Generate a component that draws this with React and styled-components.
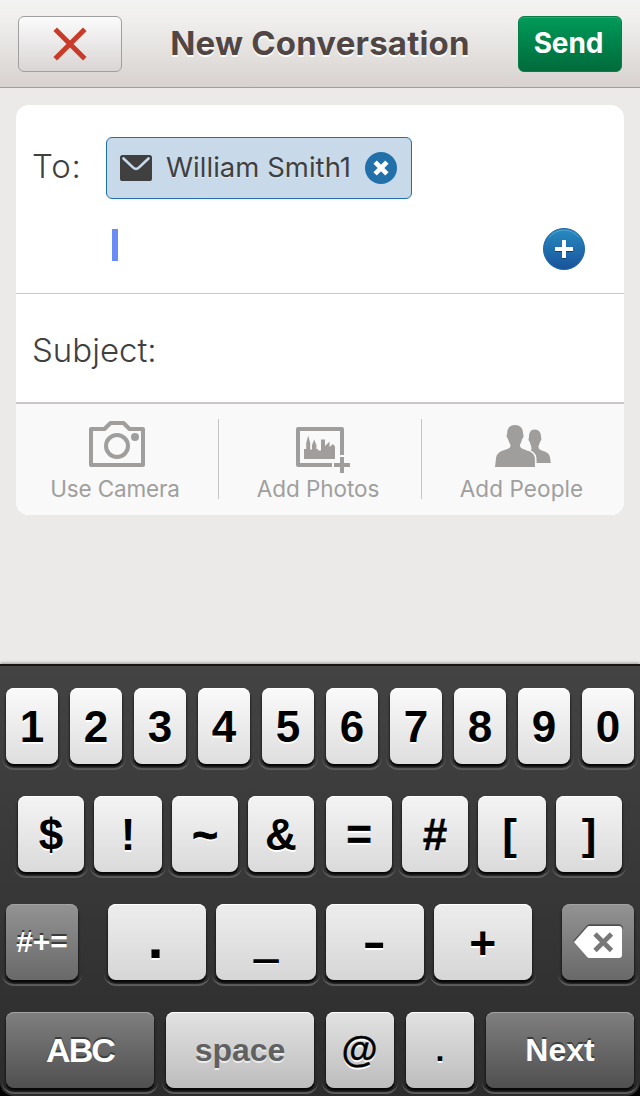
import React from 'react';
import styled, { createGlobalStyle, css } from 'styled-components';

const Global = createGlobalStyle`
  * { box-sizing: border-box; }
  body { margin: 0; background: #ebeae8; }
  button { appearance: none; border: 0; margin: 0; padding: 0; font: inherit; color: inherit; background: none; }
  svg { display: block; flex: none; overflow: visible; }
`;

const Screen = styled.div`
  width: 640px;
  height: 1096px;
  display: flex;
  flex-direction: column;
  overflow: hidden;
  background: #ebeae8;
  font-family: Inter, sans-serif;
  color: #404040;
  white-space: nowrap;
`;

const Header = styled.header`
  height: 88px;
  flex: none;
  display: flex;
  justify-content: space-between;
  align-items: flex-start;
  padding: 16px 18px 0;
  border-bottom: 1px solid #a09f9e;
  background: linear-gradient(#f3f3f3, #efeeec 25%, #d7d2d0);
`;

const HeaderButton = styled.button`
  width: 104px;
  height: 56px;
  border-radius: 6px;
  display: flex;
  justify-content: center;
  align-items: center;
`;

const CancelButton = styled(HeaderButton)`
  border: 1px solid #a09f9f;
  background: linear-gradient(#fbfbfb, #d9d5d4);
`;

const SendButton = styled(HeaderButton)`
  border: 1px solid #0a7c48;
  background: linear-gradient(#009a59, #006b3c);
  box-shadow: inset 0 1px 0 #2aa873;
  color: #fff;
  font-size: 28px;
  font-weight: 700;
  letter-spacing: -0.1px;
  padding: 0 3px 3px 0;
`;

const Title = styled.h1`
  margin: 0;
  height: 55px;
  line-height: 55px;
  font-size: 33px;
  font-weight: 700;
  letter-spacing: 0.18px;
  color: #524644;
  text-shadow: 0 2px 0 #fff;
`;

const Card = styled.section`
  margin: 17px 16px 0;
  height: 410px;
  flex: none;
  display: flex;
  flex-direction: column;
  border-radius: 13px;
  overflow: hidden;
  background: #fff;
`;

const Recipients = styled.div`
  height: 189px;
  padding: 32px 39px 0 16px;
  border-bottom: 1px solid #c9c9c9;
  display: grid;
  grid-template-columns: 74px 1fr auto;
  grid-template-rows: 62px 29px 42px;
`;

const FieldLabel = styled.label`
  font-size: 33px;
  font-weight: 360;
  line-height: 58px;
  letter-spacing: ${(p) => p.$spacing}px;
`;

const Chip = styled.div`
  grid-column: 2 / 4;
  justify-self: start;
  width: 306px;
  height: 62px;
  padding: 0 14px 0 13px;
  display: flex;
  align-items: center;
  border: 1px solid #1f70ac;
  border-radius: 6px;
  background: #c8dae9;
`;

const ChipName = styled.span`
  flex: 1;
  padding: 0 0 2px 14px;
  font-size: 27.5px;
  font-weight: 380;
  letter-spacing: 0.02px;
  text-shadow: 0 1px 0 #e4edf5;
`;

const Caret = styled.span`
  grid-column: 2;
  grid-row: 3;
  margin: 1px 0 0 6px;
  width: 6px;
  height: 32px;
  background: #698bf5;
`;

const AddButton = styled.button`
  grid-column: 3;
  grid-row: 3;
  width: 42px;
  height: 42px;
`;

const Subject = styled.div`
  height: 110px;
  padding: 27px 16px 0;
  border-bottom: 2px solid #ccc7c7;
`;

const Actions = styled.div`
  flex: 1;
  display: grid;
  grid-template-columns: 202px 1px 202px 1px 202px;
  background: #f9f9f9;
`;

const Divider = styled.span`
  height: 80px;
  margin-top: 15px;
  background: #c4c4c4;
`;

const Action = styled.button`
  display: flex;
  flex-direction: column;
  align-items: center;
  padding-top: 15px;
  color: #9f9f9e;
  font-size: 22.5px;
  font-weight: 370;
  letter-spacing: ${(p) => p.$spacing}px;
`;

const ActionText = styled.span`
  line-height: 28px;
  margin-top: 4px;
  margin-left: ${(p) => p.$shift || 0}px;
`;

const Keyboard = styled.section`
  margin-top: auto;
  height: 432px;
  flex: none;
  background: #000;
  box-shadow: 0 -1px 3px rgba(0, 0, 0, 0.35);
`;

const Keys = styled.div`
  height: 432px;
  padding: 22px 6px 0;
  border-top: 2px solid #171615;
  border-radius: 0 0 14px 14px;
  background: linear-gradient(#434343, #2c2c2c);
  display: flex;
  flex-direction: column;
  gap: 32px;
  isolation: isolate;
`;

const KeyRow = styled.div`
  height: 76px;
  display: grid;
  grid-template-columns: ${(p) => p.$columns};
  justify-content: space-between;
  padding: 0 ${(p) => p.$inset || 0}px;
`;

const tones = {
  light: css`
    color: #000;
    text-shadow: 0 2px 0 #fff;
  `,
  soft: css`
    color: #606060;
    text-shadow: 0 2px 0 #ececec;
  `,
  dark: css`
    color: #fff;
    text-shadow: 0 -2px 0 #3c3c3c;
  `,
};

const Key = styled.button`
  position: relative;
  height: 76px;
  margin: 0 ${(p) => p.$after || 0}px 0 ${(p) => p.$before || 0}px;
  display: flex;
  justify-content: center;
  align-items: center;
  border-radius: 8px;
  font-family: "Liberation Sans", Arial, sans-serif;
  font-weight: 700;
  font-size: ${(p) => p.$size || 44}px;
  letter-spacing: ${(p) => p.$spacing || 0}px;
  padding: ${(p) => p.$drop || 0}px ${(p) => p.$nudge || 0}px ${(p) => p.$lift || 0}px 0;
  background: linear-gradient(${(p) => p.$from}, ${(p) => p.$to});
  box-shadow: inset 0 1px 0 ${(p) => (p.$tone === 'dark' ? '#a2a2a2' : '#fff')}, 0 2px 1px #080808,
    0 3px 3px 0 rgba(0, 0, 0, 0.75);
  ${(p) => tones[p.$tone || 'light']}

  &::before {
    content: '';
    position: absolute;
    z-index: -1;
    left: -4px;
    right: -4px;
    bottom: -6px;
    height: 22px;
    border-bottom: 2px solid #606060;
    border-radius: 0 0 12px 12px;
  }
`;

const Glyph = styled.span`
  display: block;
  transform: scale(${(p) => p.$x || 1}, ${(p) => p.$y || 1});
  -webkit-text-stroke: ${(p) => p.$stroke || 0}px currentColor;
`;

const CrossIcon = () => (
  <svg width="34" height="34" viewBox="0 0 34 34">
    <path d="M2.2 2.2 31.8 31.8M31.8 2.2 2.2 31.8" stroke="#c93a29" strokeWidth="5" />
  </svg>
);

const MailIcon = () => (
  <svg width="32" height="26" viewBox="0 0 32 26">
    <rect width="32" height="26" rx="2.6" fill="#404040" />
    <path d="M3.5 3.5 13.2 12.6Q16 15.2 18.8 12.6L28.5 3.5" fill="none" stroke="#c8dae9" strokeWidth="2.6" strokeLinecap="round" />
  </svg>
);

const RemoveIcon = () => (
  <svg width="32" height="32" viewBox="0 0 32 32">
    <circle cx="16" cy="16" r="16" fill="#2170aa" />
    <path d="m10.1 10.1 11.8 11.8M21.9 10.1 10.1 21.9" stroke="#fff" strokeWidth="4.7" />
  </svg>
);

const PlusIcon = () => (
  <svg width="42" height="42" viewBox="0 0 42 42">
    <defs>
      <linearGradient id="plusFill" x1="0" y1="0" x2="0" y2="1">
        <stop offset="0" stopColor="#278bc1" />
        <stop offset="1" stopColor="#19539a" />
      </linearGradient>
    </defs>
    <circle cx="21" cy="21" r="20.5" fill="url(#plusFill)" stroke="#1d66a5" />
    <path d="M6 9.5A19 19 0 0 1 36 9.5" fill="none" stroke="#58a5d0" strokeWidth=".9" />
    <path d="M12 22h18M21 13v18" stroke="#123f77" strokeWidth="4" />
    <path d="M12 21h18M21 12v18" stroke="#fff" strokeWidth="4" />
  </svg>
);

const CameraIcon = () => (
  <svg width="56" height="52" viewBox="0 0 56 52">
    <g transform="translate(0 2)" fill="none" stroke="#9f9e9c" strokeWidth="4" strokeLinejoin="round">
      <path d="M2 8h13.5l6-6h13l6 6H54v36H2Z" />
      <circle cx="28" cy="25" r="11" />
      <circle cx="46" cy="16" r="4" fill="#9f9e9c" stroke="none" />
    </g>
  </svg>
);

const PhotoIcon = () => (
  <svg width="48" height="52" viewBox="0 0 48 52">
    <path d="M46 36V10H2v36h34" fill="none" stroke="#9f9e9c" strokeWidth="4" strokeLinejoin="round" />
    <path d="M8 40V30h2.2V24l2-7.500 2 7.500v6.500h1.800V26l2.200-5.500 2.200 5.500v4h1.600v1.500h3V20.500h4V27l4.500-4.500V28l3.500-3 2 2.500V40Z" fill="#9f9e9c" />
    <path d="M46 38v16M38 46h16" stroke="#9f9e9c" strokeWidth="4" />
  </svg>
);

const PeopleIcon = () => (
  <svg width="56" height="52" viewBox="0 0 56 52">
    <g fill="#9f9e9c">
      <path d="M39.500 10.500c4.500 0 6.500 3 6.500 7 0 1 .6 1.500.4 3-.2 1.200-1 1.400-1.300 2.500-.5 2-1.600 3-1.600 5 0 2.500 2 3 5.500 4.300 4 1.500 5.500 3 6 6l.8 5.700H38l-5-12c2-.7 3.500-1 3.500-2.600 0-1.500-1-4-1.500-6-.3-1-1.200-1.300-1.400-2.500-.2-1.500.4-2 .4-3 0-4 1.500-7.400 5.500-7.400Z" />
      <path d="M20 6c5 0 8 3 8 8 0 1.500.8 1.500.5 3.500-.3 1.500-1.200 2-1.500 3-.6 3-2 4-2 6 0 3 3 3.600 7.500 5C37 33 39 35 39.500 38.500L40 48H0l1-8.500C1.500 35 4 33 8 31.500c4.500-1.600 7.500-2 7.500-5 0-2-1.700-3-2.300-6-.3-1-1.200-1.500-1.500-3-.3-2 .5-2 .5-3.500C12.200 9 15 6 20 6Z" />
      <path d="M31 30.200c6.500 1.800 9 4 9.600 8.300l.4 9.500" fill="none" stroke="#f9f9f9" strokeWidth="1.6" />
    </g>
  </svg>
);

const BackspaceIcon = () => (
  <svg width="48" height="32" viewBox="0 0 48 32">
    <path d="M0 15.500 13 1q1-1.700 3-1.700h28.500q3.500 0 3.500 3.500" fill="none" stroke="#505050" strokeWidth="2" />
    <path d="M0 16 13 1.200Q14 0 15.500 0H45q3 0 3 3v26q0 3-3 3H15.500Q14 32 13 30.800Z" fill="#fff" />
    <path d="m21 8 16.500 16.500M37.500 8 21 24.500" stroke="#777" strokeWidth="4.6" />
  </svg>
);

const digits = ['1', '2', '3', '4', '5', '6', '7', '8', '9', '0'];
const symbols = [
  { char: '$' },
  { char: '!' },
  { char: '~', stroke: 1 },
  { char: '&', after: 2 },
  { char: '=', stroke: 0.5 },
  { char: '#', stroke: 0.4 },
  { char: '[', y: 0.95, nudge: 5 },
  { char: ']', y: 0.95 },
];

export default function App() {
  return (
    <Screen>
      <Global />
      <Header>
        <CancelButton aria-label="Cancel"><CrossIcon /></CancelButton>
        <Title>New Conversation</Title>
        <SendButton>Send</SendButton>
      </Header>
      <Card>
        <Recipients>
          <FieldLabel $spacing={0.8}>To:</FieldLabel>
          <Chip>
            <MailIcon />
            <ChipName>William Smith1</ChipName>
            <RemoveIcon />
          </Chip>
          <Caret />
          <AddButton aria-label="Add recipient"><PlusIcon /></AddButton>
        </Recipients>
        <Subject>
          <FieldLabel $spacing={0}>Subject:</FieldLabel>
        </Subject>
        <Actions>
          <Action $spacing={-0.15}><CameraIcon /><ActionText $shift={-4}>Use Camera</ActionText></Action>
          <Divider />
          <Action $spacing={-0.05}><PhotoIcon /><ActionText $shift={-4}>Add Photos</ActionText></Action>
          <Divider />
          <Action $spacing={0.1}><PeopleIcon /><ActionText $shift={-3}>Add People</ActionText></Action>
        </Actions>
      </Card>
      <Keyboard>
        <Keys>
          <KeyRow $columns="repeat(10, 52px)">
            {digits.map((d) => <Key key={d} $drop={1} $from="#fafafa" $to="#dedede">{d}</Key>)}
          </KeyRow>
          <KeyRow $inset={12} $columns="66px 68px 66px 68px 66px 66px 68px 66px">
            {symbols.map((s) => (
              <Key key={s.char} $after={s.after} $nudge={s.nudge} $drop={2} $from="#f4f4f4" $to="#dadada">
                <Glyph $x={s.x} $y={s.y} $stroke={s.stroke}>{s.char}</Glyph>
              </Key>
            ))}
          </KeyRow>
          <KeyRow $columns="92px 98px 100px 98px 98px 92px">
            <Key $tone="dark" $after={20} $size={30} $from="#939393" $to="#696969">#+=</Key>
            <Key $size={58} $lift={10} $nudge={3} $from="#ededed" $to="#d6d6d6">.</Key>
            <Key $from="#ededed" $to="#d6d6d6"><Glyph $x={0.93} $stroke={2}>_</Glyph></Key>
            <Key $nudge={1} $from="#ededed" $to="#d6d6d6"><Glyph $x={1.6}>-</Glyph></Key>
            <Key $drop={2} $from="#ededed" $to="#d6d6d6"><Glyph $x={1.05} $y={1.05}>+</Glyph></Key>
            <Key $tone="dark" $before={20} $from="#939393" $to="#696969" aria-label="Delete"><BackspaceIcon /></Key>
          </KeyRow>
          <KeyRow $columns="148px 148px 68px 68px 148px">
            <Key $tone="dark" $size={34} $spacing={-1.9} $from="#7f7f7f" $to="#505050">ABC</Key>
            <Key $tone="soft" $size={32} $drop={1} $from="#e2e2e2" $to="#bdbdbd">space</Key>
            <Key $size={36} $from="#e2e2e2" $to="#bdbdbd"><Glyph $x={1.03} $stroke={0.3}>@</Glyph></Key>
            <Key $size={32} $from="#e2e2e2" $to="#bdbdbd">.</Key>
            <Key $tone="dark" $size={32} $drop={1} $from="#7f7f7f" $to="#505050">Next</Key>
          </KeyRow>
        </Keys>
      </Keyboard>
    </Screen>
  );
}
